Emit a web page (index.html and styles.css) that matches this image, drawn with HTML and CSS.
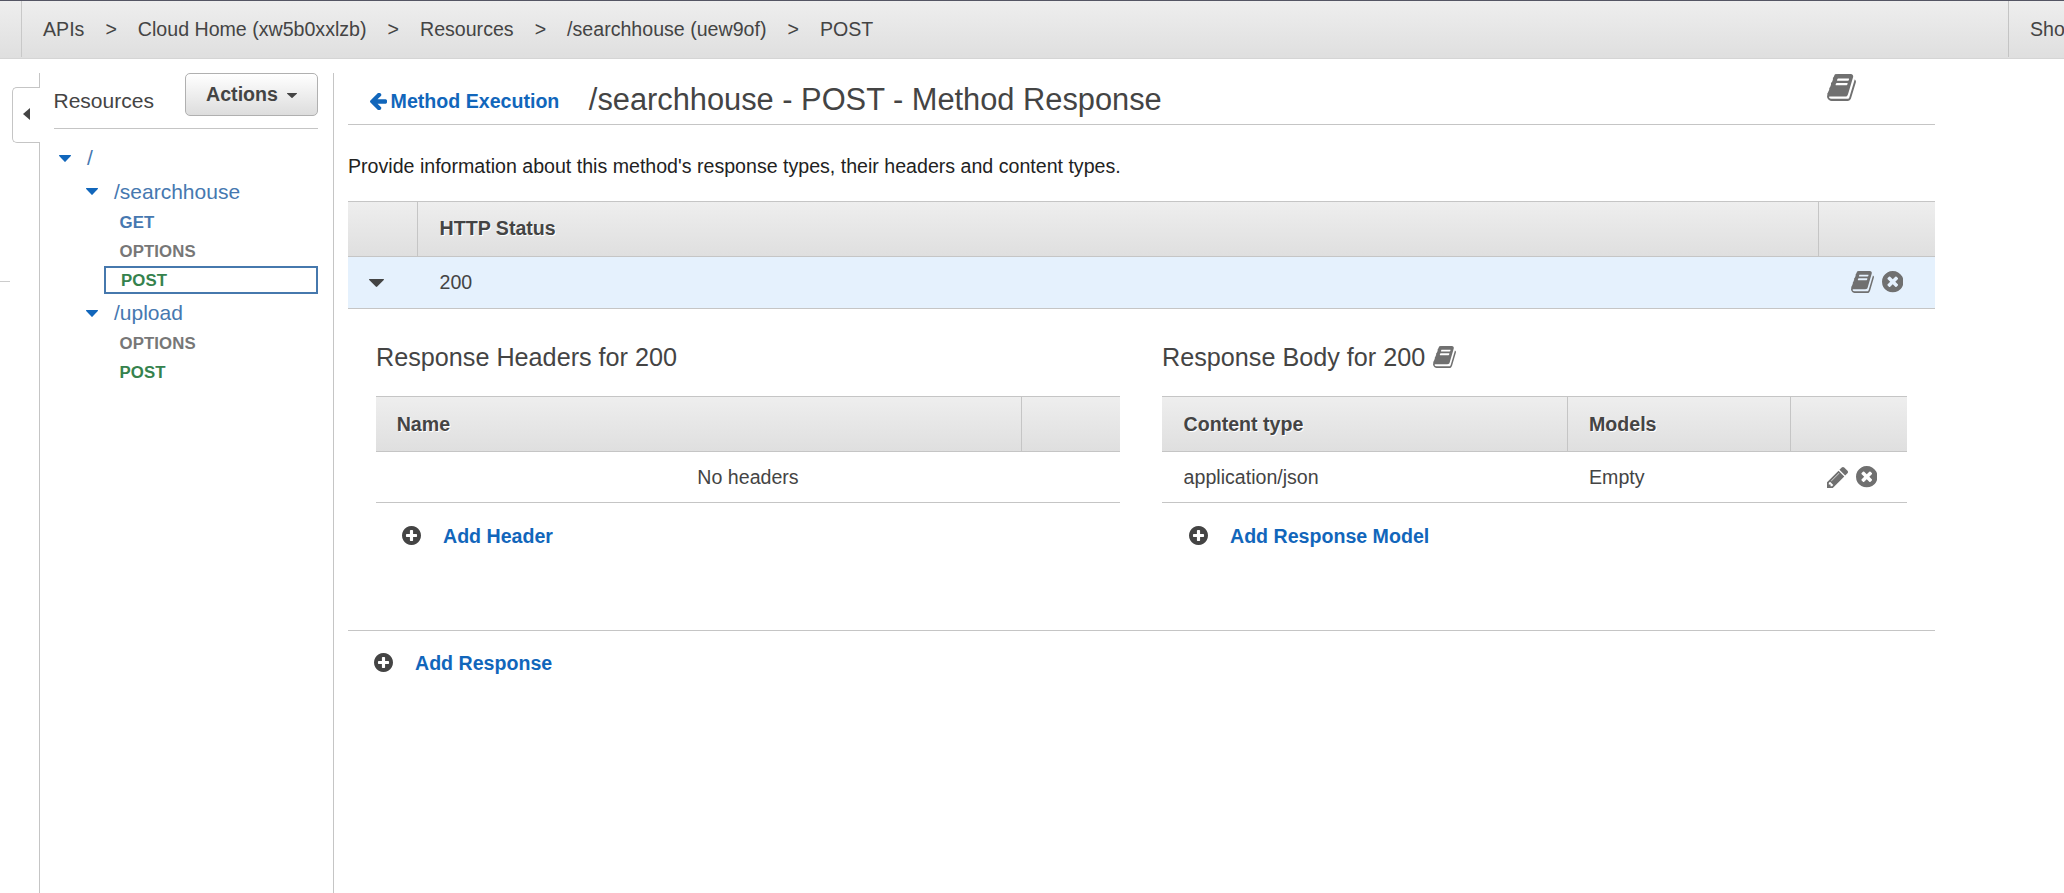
FILE: index.html
```html
<!DOCTYPE html>
<html lang="en">
<head>
<meta charset="utf-8">
<title>Method Response</title>
<link rel="stylesheet" href="styles.css">
</head>
<body>
<svg class="sprite" aria-hidden="true">
  <symbol id="book" viewBox="60 128 1672 1536" preserveAspectRatio="none"><path d="M1703 478q40 57 18 129l-275 906q-19 64-76.500 107.500t-122.500 43.500h-923q-77 0-148.500-53.500t-99.500-131.500q-24-67-2-127 0-4 3-27t4-37q1-8-3-21.500t-3-19.500q2-11 8-21t16.500-23.500 16.500-23.500q23-38 45-91.500t30-91.500q3-10 .5-30t-.5-28q3-11 17-28t17-23q21-36 42-92t25-90q1-9-2.500-32t.5-28q4-13 22-30.500t22-22.500q19-26 42.500-84.500t27.500-96.500q1-8-3-25.500t-2-26.500q2-8 9-18t18-23 17-21q8-12 16.500-30.500t15-35 16-36 19.500-32 26.500-23.500 36-11.500 47.500 5.500l-1 3q38-9 51-9h761q74 0 114 56t18 130l-274 906q-36 119-71.500 153.500t-128.500 34.500h-869q-27 0-38 15-11 16-1 43 24 70 144 70h923q29 0 56-15.500t35-41.500l300-987q7-22 5-57 38 15 59 43zm-1064 2q-4 13 2 22.500t20 9.500h608q13 0 25.500-9.500t16.500-22.500l21-64q4-13-2-22.500t-20-9.500h-608q-13 0-25.500 9.500t-16.500 22.500zm-83 256q-4 13 2 22.500t20 9.500h608q13 0 25.500-9.500t16.500-22.500l21-64q4-13-2-22.500t-20-9.500h-608q-13 0-25.500 9.500t-16.500 22.500z"/></symbol>
  <symbol id="remove" viewBox="128 128 1536 1536"><path d="M1277 1122q0-26-19-45l-181-181 181-181q19-19 19-45 0-27-19-46l-90-90q-19-19-46-19-26 0-45 19l-181 181-181-181q-19-19-45-19-27 0-46 19l-90 90q-19 19-19 46 0 26 19 45l181 181-181 181q-19 19-19 45 0 27 19 46l90 90q19 19 46 19 26 0 45-19l181-181 181 181q19 19 45 19 27 0 46-19l90-90q19-19 19-46zm387-226q0 209-103 385.500t-279.500 279.500-385.500 103-385.500-103-279.500-279.500-103-385.500 103-385.500 279.500-279.500 385.500-103 385.500 103 279.500 279.500 103 385.500z"/></symbol>
  <symbol id="plus" viewBox="128 128 1536 1536"><path d="M1344 960v-128q0-26-19-45t-45-19h-256v-256q0-26-19-45t-45-19h-128q-26 0-45 19t-19 45v256h-256q-26 0-45 19t-19 45v128q0 26 19 45t45 19h256v256q0 26 19 45t45 19h128q26 0 45-19t19-45v-256h256q26 0 45-19t19-45zm320-64q0 209-103 385.500t-279.500 279.500-385.500 103-385.500-103-279.500-279.500-103-385.500 103-385.500 279.500-279.500 385.500-103 385.500 103 279.500 279.500 103 385.500z"/></symbol>
  <symbol id="pencil" viewBox="128 149 1515 1515"><path d="M491 1536l91-91-235-235-91 91v107h128v128h107zm523-928q0-22-22-22-10 0-17 7l-542 542q-7 7-7 17 0 22 22 22 10 0 17-7l542-542q7-7 7-17zm-54-192l416 416-832 832h-416v-416zm683 96q0 53-37 90l-166 166-416-416 166-165q36-38 90-38 53 0 91 38l235 234q37 39 37 91z"/></symbol>
  <symbol id="back" viewBox="64 219 1472 1482" preserveAspectRatio="none"><path d="M1536 896v128q0 53-32.500 90.500t-84.500 37.500h-704l293 294q38 36 38 90t-38 90l-75 76q-37 37-90 37-52 0-91-37l-651-652q-37-37-37-90 0-52 37-91l651-650q38-38 91-38 52 0 90 38l75 74q38 38 38 91t-38 91l-293 293h704q52 0 84.500 37.500t32.500 90.500z"/></symbol>
  <symbol id="down" viewBox="0 0 12 7" preserveAspectRatio="none"><path d="M.4 0h11.200q.7.300.2.900l-5.200 5.700q-.6.600-1.200 0l-5.200-5.700q-.5-.6.200-.9z"/></symbol>
</svg>

<header class="topbar">
  <div class="topbar-edge"></div>
  <nav class="crumbs">
    <span>APIs</span><span>&gt;</span><span>Cloud Home (xw5b0xxlzb)</span><span>&gt;</span><span>Resources</span><span>&gt;</span><span>/searchhouse (uew9of)</span><span>&gt;</span><span>POST</span>
  </nav>
  <div class="hints">Sho</div>
</header>

<div class="body">
  <div class="gutter"><div class="stub"></div></div>
  <aside class="sidebar">
    <button class="collapse" aria-label="Collapse"><svg viewBox="0 0 7 12"><path d="M7 0v12L0 6z"/></svg></button>
    <div class="side-head">
      <span class="side-title">Resources</span>
      <button class="actions"><span>Actions</span><svg class="caret-sm"><use href="#down"/></svg></button>
    </div>
    <div class="tree">
      <div class="node root"><svg class="caret"><use href="#down"/></svg>/</div>
      <div class="node child"><svg class="caret"><use href="#down"/></svg>/searchhouse</div>
      <div class="verb get">GET</div>
      <div class="verb">OPTIONS</div>
      <div class="verb post selected">POST</div>
      <div class="node child"><svg class="caret"><use href="#down"/></svg>/upload</div>
      <div class="verb">OPTIONS</div>
      <div class="verb post">POST</div>
    </div>
  </aside>
  <main class="main">
    <div class="title-row">
      <a class="back"><svg><use href="#back"/></svg><span>Method Execution</span></a>
      <h1>/searchhouse - POST - Method Response</h1>
      <svg class="book-lg"><use href="#book"/></svg>
    </div>
    <p class="intro">Provide information about this method's response types, their headers and content types.</p>
    <div class="thead status-cols"><div></div><div class="th">HTTP Status</div><div class="th"></div></div>
    <div class="status-row status-cols">
      <svg class="caret-row"><use href="#down"/></svg>
      <div class="code">200</div>
      <div class="tools"><svg class="book"><use href="#book"/></svg><svg class="remove"><use href="#remove"/></svg></div>
    </div>
    <div class="detail">
      <section>
        <h2>Response Headers for 200</h2>
        <div class="thead header-cols"><div class="first">Name</div><div class="th"></div></div>
        <div class="row empty">No headers</div>
        <div class="add"><svg><use href="#plus"/></svg><a>Add Header</a></div>
      </section>
      <section>
        <h2>Response Body for 200<svg class="book"><use href="#book"/></svg></h2>
        <div class="thead body-cols"><div class="first">Content type</div><div class="th">Models</div><div class="th"></div></div>
        <div class="row body-cols">
          <div class="first">application/json</div><div class="th">Empty</div>
          <div class="tools"><svg class="pencil"><use href="#pencil"/></svg><svg class="remove"><use href="#remove"/></svg></div>
        </div>
        <div class="add add-model"><svg><use href="#plus"/></svg><a>Add Response Model</a></div>
      </section>
    </div>
    <div class="add add-response"><svg><use href="#plus"/></svg><a>Add Response</a></div>
  </main>
</div>
</body>
</html>
```
FILE: styles.css
```css
* { box-sizing: border-box; }
html, body { height: 100%; }
body {
  margin: 0;
  display: flex;
  flex-direction: column;
  overflow: hidden;
  background: #fff;
  color: #444;
  font: 19.6px/28px "Liberation Sans", Arial, sans-serif;
  white-space: nowrap;
}
svg { display: block; flex: none; fill: currentColor; }
.sprite { position: absolute; width: 0; height: 0; }
h1, h2, p { margin: 0; font-weight: normal; }
button { font: inherit; color: inherit; padding: 0; }

.topbar {
  flex: none;
  display: flex;
  height: 59px;
  border-top: 1px solid #545564;
  border-bottom: 1px solid #d5d5d5;
  background: linear-gradient(#eee, #dfdfdf);
}
.topbar-edge { width: 22px; height: 56px; border-right: 1px solid #c8c8c8; }
.crumbs { flex: 1; display: flex; align-items: center; gap: 21px; padding: 0 0 2px 21px; }
.hints {
  width: 56px;
  height: 56px;
  padding-left: 21px;
  border-left: 1px solid #c4c4c4;
  line-height: 57px;
  overflow: hidden;
}

.body { flex: 1; display: flex; padding-top: 14px; }
.gutter { width: 39px; padding-top: 208px; }
.stub { width: 10px; height: 1px; background: #ccc; }

.sidebar {
  position: relative;
  width: 294px;
  padding: 0 15px 0 14px;
  border-left: 1px solid #c5c5c5;
}
.collapse {
  position: absolute;
  left: -28px;
  top: 14px;
  width: 28px;
  height: 56px;
  border: 1px solid #c5c5c5;
  border-right: 0;
  border-radius: 5px 0 0 5px;
  background: #fff;
}
.collapse svg { width: 7px; height: 12px; margin: -2px 0 0 10px; }
.side-head {
  display: flex;
  justify-content: space-between;
  height: 56px;
  border-bottom: 1px solid #c5c5c5;
}
.side-title { margin-left: -.5px; font-size: 21px; line-height: 55px; }
.actions {
  display: flex;
  align-items: center;
  justify-content: center;
  gap: 9px;
  width: 133px;
  height: 43px;
  padding: 0 0 2px;
  border: 1px solid #b0b0b0;
  border-radius: 5px;
  background: linear-gradient(#fff, #ddd);
  font-weight: bold;
}
.caret-sm { width: 10px; height: 5px; margin-top: 3px; }

.tree { padding-top: 12px; }
.node { display: flex; align-items: center; gap: 16px; height: 34px; color: #4678b0; font-size: 21px; }
.root { padding-left: 5px; }
.child { height: 33px; padding-left: 32px; }
.selected + .child { height: 34px; padding-top: 2px; }
.caret { width: 12px; height: 7px; color: #1166bb; }
.verb { height: 29px; padding-left: 65.600px; line-height: 29px; font-size: 16.8px; letter-spacing: .08px; font-weight: bold; color: #777; }
.get { color: #4678b0; }
.post { color: #35824d; }
.selected {
  height: 28px;
  margin: 0 0 1px 50px;
  padding-left: 15px;
  border: 2px solid #4678ad;
  line-height: 25px;
}

.main { width: 1602px; padding-left: 14px; border-left: 1px solid #c5c5c5; }
.title-row { display: flex; height: 52px; border-bottom: 1px solid #c5c5c5; }
.back { display: flex; align-items: center; gap: 4px; padding: 4px 0 0 21.600px; font-weight: bold; color: #1166bb; }
.back svg { width: 17px; height: 17px; margin-top: 1px; }
h1 { flex: 1; padding-left: 29.500px; font-size: 30.8px; line-height: 53px; }
.book-lg { width: 29px; height: 27px; margin: 1px 79px 0 0; color: #707070; }
.intro { height: 76px; padding-top: 27px; color: #222; }

.thead {
  display: grid;
  height: 56px;
  border: solid #c5c5c5;
  border-width: 1px 0;
  background: linear-gradient(#eee, #dfdfdf);
  font-weight: bold;
  line-height: 53px;
  text-shadow: 1px 1px 0 #fff;
}
.th { padding-left: 21px; }
.thead .th { border-left: 1px solid #c5c5c5; }
.row .th { padding-left: 22px; }
.status-cols { display: grid; grid-template-columns: 69px 1401px 117px; }
.status-cols .th { padding-left: 21.600px; }
.header-cols { grid-template-columns: 645px 99px; line-height: 55px; }
.body-cols { display: grid; grid-template-columns: 405px 223px 117px; }
.thead.body-cols { line-height: 55px; }
.first { padding-left: 20.700px; }
.body-cols .first { padding-left: 21.600px; }
.status-row { height: 52px; align-items: center; border-bottom: 1px solid #c5c5c5; background: #e5f1fd; }
.caret-row { width: 15px; height: 8px; margin-left: 20.500px; }
.code { padding: 0 0 2px 22.500px; }
.tools { display: flex; align-items: center; justify-content: flex-end; gap: 7.500px; padding: 0 32px 1px 0; color: #707070; }
.book { width: 23px; height: 22px; color: #707070; }
.remove { width: 21.500px; height: 21.500px; }
.pencil { width: 21px; height: 21px; }

.detail {
  display: grid;
  grid-template-columns: 744px 745px;
  gap: 42px;
  height: 322px;
  padding: 0 28px;
  border-bottom: 1px solid #c5c5c5;
}
h2 { display: flex; align-items: center; gap: 8px; height: 87px; padding-top: 9px; font-size: 25.2px; }
.row { height: 51px; border-bottom: 1px solid #c5c5c5; line-height: 50px; }
.row .tools { padding: 0 30px 0 0; }
.empty { text-align: center; }
.add { display: flex; align-items: center; gap: 22px; height: 65px; padding-left: 26px; font-weight: bold; }
.add-model { padding-left: 27px; }
.add-response { height: 63px; }
.add svg { width: 19px; height: 19px; margin-top: -1px; }
.add a { color: #1166bb; }
```
